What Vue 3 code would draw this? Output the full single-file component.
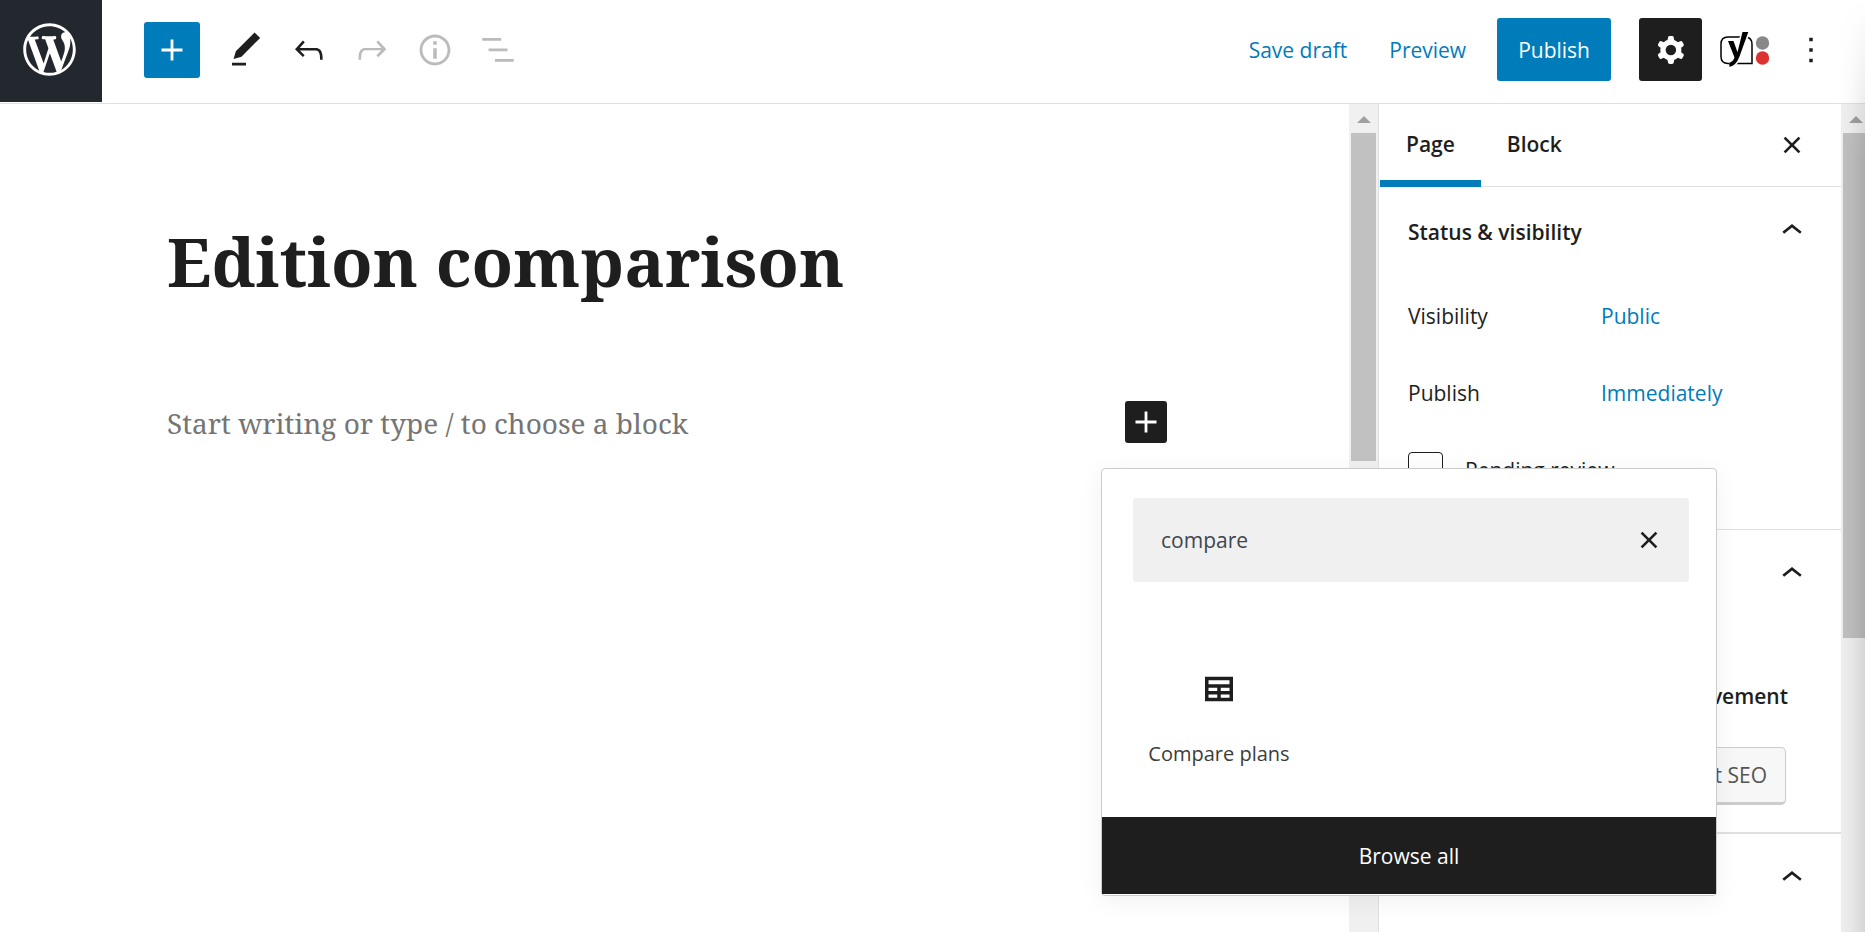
<script setup>
import { ref } from 'vue'

const icons = {
  plus: 'M18 11.2h-5.2V6h-1.6v5.2H6v1.6h5.2V18h1.6v-5.2H18z',
  edit: 'M20.1 5.1L16.9 2 6.2 12.7l-1.3 4.4 4.5-1.3L20.1 5.1zM4 20.8h8v-1.5H4v1.5z',
  undo: 'M18.3 11.7c-.6-.6-1.4-.9-2.3-.9H6.7l2.9-3.3-1.1-1-4.5 5L8.5 16l1-1-2.7-2.7H16c.5 0 .9.2 1.3.5 1 1 1 3.4 1 4.5v.3h1.5v-.2c0-1.5 0-4.3-1.5-5.7z',
  redo: 'M15.6 6.5l-1.1 1 2.9 3.3H8c-.9 0-1.7.3-2.3.9-1.4 1.5-1.4 4.2-1.4 5.6v.2h1.5v-.3c0-1.1 0-3.5 1-4.5.3-.3.7-.5 1.3-.5h9.2L14.5 15l1.1 1.1 4.6-4.6-4.6-5z',
  info: 'M12 3.2c-4.8 0-8.8 3.9-8.8 8.8 0 4.8 3.9 8.8 8.8 8.8 4.8 0 8.8-3.9 8.8-8.8 0-4.8-4-8.8-8.8-8.8zm0 16c-4 0-7.2-3.3-7.2-7.2C4.8 8 8 4.8 12 4.8s7.2 3.3 7.2 7.2c0 4-3.2 7.2-7.2 7.2zM11 17h2v-6h-2v6zm0-8h2V7h-2v2z',
  outline: 'M13.8 5.2H3v1.5h10.8V5.2zm-3.6 12v1.5H21v-1.5H10.2zm7.2-6H6.6v1.5h10.8v-1.5z',
  cog: 'M10.289 4.836A1 1 0 0111.275 4h1.306a1 1 0 01.987.836l.244 1.466c.787.26 1.503.679 2.108 1.218l1.393-.522a1 1 0 011.216.437l.653 1.13a1 1 0 01-.23 1.273l-1.148.944a6.025 6.025 0 010 2.435l1.149.946a1 1 0 01.23 1.272l-.653 1.13a1 1 0 01-1.216.437l-1.394-.522c-.605.54-1.32.958-2.108 1.218l-.244 1.466a1 1 0 01-.987.836h-1.306a1 1 0 01-.986-.836l-.244-1.466a5.995 5.995 0 01-2.108-1.218l-1.394.522a1 1 0 01-1.217-.436l-.653-1.131a1 1 0 01.23-1.272l1.149-.946a6.026 6.026 0 010-2.435l-1.148-.944a1 1 0 01-.23-1.272l.653-1.131a1 1 0 011.217-.437l1.393.522a5.994 5.994 0 012.108-1.218l.244-1.466zM14.929 12a3 3 0 11-6 0 3 3 0 016 0z',
  more: 'M13 19h-2v-2h2v2zm0-6h-2v-2h2v2zm0-6h-2V5h2v2z',
  close: 'M12 13.06l3.712 3.713 1.061-1.06L13.061 12l3.712-3.712-1.06-1.06L12 10.938 8.288 7.227l-1.061 1.06L10.939 12l-3.712 3.712 1.06 1.061L12 13.061z',
  chevron: 'M6.5 12.4L12 8l5.5 4.4-.9 1.2L12 10l-4.5 3.6-1-1.2z',
  table: 'M4 5v14h16V5H4zm14 2v2.300H6V7h12zM6 11.300h5v1.900H6v-1.900zm7 0h5v1.900h-5v-1.900zM6 15.200h5V17H6v-1.800zm7 1.800v-1.800h5V17h-5z'
}

const tools = [
  { icon: 'edit', label: 'Tools' },
  { icon: 'undo', label: 'Undo' },
  { icon: 'redo', label: 'Redo', disabled: true },
  { icon: 'info', label: 'Details', disabled: true },
  { icon: 'outline', label: 'Outline', disabled: true }
]

const query = ref('compare')
const pending = ref(false)
</script>

<template>
  <div class="app">
    <header class="header">
      <a class="logo" href="#" aria-label="View pages">
        <svg viewBox="-2 -2 24 24"><path d="M20 10c0-5.51-4.49-10-10-10C4.48 0 0 4.49 0 10c0 5.52 4.48 10 10 10 5.51 0 10-4.48 10-10zM7.780 15.370L4.370 6.220c.55-.02 1.170-.08 1.170-.08.5-.06.44-1.130-.06-1.110 0 0-1.450.11-2.370.11-.18 0-.37 0-.58-.01C4.120 2.690 6.870 1.110 10 1.110c2.330 0 4.450.87 6.050 2.340-.68-.11-1.650.39-1.650 1.580 0 .74.45 1.360.9 2.100.35.61.55 1.360.55 2.460 0 1.490-1.400 5-1.400 5l-3.030-8.370c.54-.02.82-.17.82-.17.5-.05.44-1.250-.06-1.220 0 0-1.440.12-2.380.12-.87 0-2.330-.12-2.330-.12-.5-.03-.56 1.200-.06 1.220l.92.08 1.260 3.410zM17.410 10c.24-.64.74-1.870.43-4.250.7 1.290 1.050 2.710 1.050 4.250 0 3.290-1.730 6.240-4.400 7.780.97-2.590 1.940-5.200 2.920-7.780zM6.100 18.090C3.120 16.650 1.110 13.530 1.110 10c0-1.300.23-2.480.72-3.590C3.250 10.300 4.670 14.200 6.100 18.090zm4.030-6.630l2.580 6.980c-.86.29-1.760.45-2.710.45-.79 0-1.570-.11-2.290-.33.81-2.380 1.620-4.740 2.420-7.100z" /></svg>
      </a>
      <div class="tools">
        <button class="inserter" type="button" aria-label="Add block">
          <svg class="icon" viewBox="0 0 24 24"><path :d="icons.plus" /></svg>
        </button>
        <button v-for="t in tools" :key="t.icon" class="tool" type="button" :aria-label="t.label" :disabled="t.disabled">
          <svg class="icon" viewBox="0 0 24 24"><path :d="icons[t.icon]" /></svg>
        </button>
      </div>
      <div class="actions">
        <button class="text-button" type="button">Save draft</button>
        <button class="text-button" type="button">Preview</button>
        <button class="publish" type="button">Publish</button>
        <button class="settings" type="button" aria-label="Settings">
          <svg class="icon" viewBox="0 0 24 24"><path fill-rule="evenodd" :d="icons.cog" /></svg>
        </button>
        <button class="yoast" type="button" aria-label="Yoast SEO">
          <svg viewBox="0 0 50 36">
            <path class="frame" d="M32 31.500V12.500Q32 5 25 5H8Q1 5 1 12V24.500Q1 31.500 8 31.500z" />
            <path class="halo" d="M12 13L17.500 25M25.500 1L17.500 22Q14.500 31.500 9.500 32.500" />
            <path class="mark" d="M8 9h5.500l4 11.200L22.500 0h5.800L19.500 24.500Q16 34 9.300 34.800V30.800Q13 30 14.500 25.600z" />
            <circle class="grey" cx="42.500" cy="11" r="6.700" />
            <circle class="red" cx="42.500" cy="26" r="6.700" />
          </svg>
        </button>
        <button class="more" type="button" aria-label="Options">
          <svg class="icon" viewBox="0 0 24 24"><path :d="icons.more" /></svg>
        </button>
      </div>
    </header>

    <div class="body">
      <main class="editor">
        <h1>Edition comparison</h1>
        <div class="block">
          <p>Start writing or type / to choose a block</p>
          <div class="anchor">
            <button class="block-add" type="button" aria-label="Add block">
              <svg class="icon" viewBox="0 0 24 24"><path :d="icons.plus" /></svg>
            </button>
            <section class="popover" aria-label="Block inserter">
              <div class="search">
                <input v-model="query" type="text" aria-label="Search for a block" />
                <button type="button" aria-label="Reset search" @click="query = ''">
                  <svg class="icon" viewBox="0 0 24 24"><path :d="icons.close" /></svg>
                </button>
              </div>
              <div class="results">
                <button class="result" type="button">
                  <svg class="icon" viewBox="0 0 24 24"><path :d="icons.table" /></svg>
                  <span>Compare plans</span>
                </button>
              </div>
              <button class="browse" type="button">Browse all</button>
            </section>
          </div>
        </div>
      </main>
      <div class="scrollbar editor-scroll"><i class="arrow"></i><i class="thumb"></i></div>

      <aside class="sidebar">
        <div class="tabs">
          <button class="tab active" type="button">Page</button>
          <button class="tab" type="button">Block</button>
          <button class="close" type="button" aria-label="Close settings">
            <svg class="icon" viewBox="0 0 24 24"><path :d="icons.close" /></svg>
          </button>
        </div>
        <section class="panel status">
          <button class="panel-head" type="button">
            <span>Status &amp; visibility</span>
            <svg class="icon" viewBox="0 0 24 24"><path :d="icons.chevron" /></svg>
          </button>
          <div class="row"><span>Visibility</span><button class="link" type="button">Public</button></div>
          <div class="row"><span>Publish</span><button class="link" type="button">Immediately</button></div>
          <div class="check">
            <input id="pending" v-model="pending" type="checkbox" />
            <label for="pending">Pending review</label>
          </div>
        </section>
        <section class="panel seo">
          <button class="panel-head" type="button" aria-label="SEO">
            <span></span>
            <svg class="icon" viewBox="0 0 24 24"><path :d="icons.chevron" /></svg>
          </button>
          <p class="score"><strong>Needs improvement</strong></p>
          <button class="improve" type="button">Yoast SEO</button>
        </section>
        <section class="panel">
          <button class="panel-head" type="button" aria-label="More settings">
            <span></span>
            <svg class="icon" viewBox="0 0 24 24"><path :d="icons.chevron" /></svg>
          </button>
        </section>
      </aside>
      <div class="scrollbar page-scroll"><i class="arrow"></i><i class="thumb"></i></div>
    </div>
    <div class="edge"></div>
  </div>
</template>

<style>
html, body { margin: 0; background: #fff; }
</style>

<style scoped>
.app {
  position: relative;
  display: flex;
  flex-direction: column;
  height: 100vh;
  overflow: hidden;
  background: #fff;
  color: #1e1e1e;
  font-family: "Segoe UI", "Open Sans", "Noto Sans", sans-serif;
  font-size: 21px;
  line-height: 32px;
}
*, *::before, *::after { box-sizing: border-box; }
button {
  display: flex;
  align-items: center;
  margin: 0;
  padding: 0;
  border: 0;
  background: none;
  color: inherit;
  font: inherit;
}
svg { display: block; fill: currentColor; flex: none; }
.icon { width: 42px; height: 42px; }

.header {
  display: flex;
  flex: none;
  align-items: center;
  height: 104px;
  border-bottom: 1px solid #e0e0e0;
}
.logo {
  display: flex;
  align-items: center;
  justify-content: center;
  align-self: flex-start;
  width: 102px;
  height: 102px;
  background: #23282e;
  color: #fff;
}
.logo svg { width: 63px; height: 63px; margin-right: 4px; margin-bottom: 4px; }
.tools { display: flex; align-items: center; margin-left: 42px; padding-bottom: 3px; }
.inserter {
  justify-content: center;
  width: 56px;
  height: 56px;
  margin-right: 14px;
  border-radius: 3px;
  background: #007cba;
  color: #fff;
}
.tool { justify-content: center; width: 63px; height: 63px; }
.tool:disabled { color: #bbb; }
.actions { display: flex; align-items: center; margin-left: auto; padding-bottom: 4px; padding-right: 33px; }
.text-button { margin-right: 42px; color: #007cba; }
.text-button + .publish { margin-left: -11px; }
.publish {
  height: 63px;
  padding: 0 21px;
  border-radius: 3px;
  background: #007cba;
  color: #fff;
}
.settings {
  justify-content: center;
  width: 63px;
  height: 63px;
  margin-left: 28px;
  border-radius: 3px;
  background: #1e1e1e;
  color: #fff;
}
.yoast { margin-left: 18px; margin-right: 20px; }
.yoast svg { width: 50px; height: 36px; }
.frame { fill: none; stroke: #000; stroke-width: 1.500; }
.halo { fill: none; stroke: #fff; stroke-width: 8; }
.mark { fill: #000; }
.grey { fill: #888; }
.red { fill: #dc3232; }

.body { display: flex; flex: 1; min-height: 0; }
.editor { flex: 1; min-width: 0; padding: 108px 182px 0 167px; }
h1 {
  margin: 0;
  font: 700 68px/98px "Noto Serif", "DejaVu Serif", serif;
  white-space: nowrap;
}
.block { display: flex; align-items: center; justify-content: space-between; margin-top: 87px; height: 50px; }
.block p { margin: 0; padding-top: 2px; color: #757575; font: 28px/50px "Noto Serif", "DejaVu Serif", serif; white-space: nowrap; }
.anchor { position: relative; }
.block-add {
  justify-content: center;
  width: 42px;
  height: 42px;
  border-radius: 3px;
  background: #1e1e1e;
  color: #fff;
}
.popover {
  position: absolute;
  z-index: 2;
  top: 67px;
  left: -24px;
  width: 616px;
  border: 1px solid #ccc;
  border-radius: 4px;
  padding-bottom: 1px;
  background: #fff;
  box-shadow: 0 5px 26px rgba(0, 0, 0, .06);
}
.search {
  display: flex;
  align-items: center;
  height: 84px;
  margin: 29px 27px 0 31px;
  padding: 0 19px 0 28px;
  border-radius: 3px;
  background: #f0f0f0;
}
.search input {
  flex: 1;
  min-width: 0;
  padding: 0;
  border: 0;
  outline: 0;
  background: none;
  color: #40464d;
  font: inherit;
}
.results { padding: 86px 31px 47px; }
.result { flex-direction: column; gap: 28px; width: 172px; font-size: 20px; color: #3c3c3c; }
.result .icon { color: #1e1e1e; }
.browse {
  justify-content: center;
  width: 100%;
  height: 77px;
  background: #1e1e1e;
  color: #fff;
}

.scrollbar { position: relative; flex: none; background: #f0f0f0; }
.editor-scroll { width: 29px; }
.page-scroll { width: 24px; }
.arrow {
  display: block;
  width: 14px;
  height: 7px;
  margin: 12px 0 10px 8px;
  background: #a0a0a0;
  clip-path: polygon(50% 0, 100% 100%, 0 100%);
}
.thumb { display: block; margin-left: 2px; background: #c1c1c1; }
.editor-scroll .thumb { width: 25px; height: 328px; }
.page-scroll .thumb { height: 505px; }

.sidebar { flex: none; width: 463px; overflow: hidden; border-left: 1px solid #e0e0e0; }
.tabs { display: flex; height: 83px; padding-left: 1px; border-bottom: 1px solid #e0e0e0; }
.tab { height: 83px; padding: 0 26px; font-weight: 600; border-bottom: 7px solid transparent; border-top: 4px solid transparent; }
.tab.active { border-bottom-color: #007cba; }
.close { margin-left: auto; padding-right: 28px; }
.panel { padding: 0 28px 0 29px; border-bottom: 1px solid #e0e0e0; }
.panel:last-child { border-bottom: 0; }
.panel-head { justify-content: space-between; width: 100%; height: 90px; font-weight: 600; }
.panel-head .icon { margin-bottom: 2px; }
.status { padding-bottom: 14px; }
.status .panel-head { margin-bottom: 7px; }
.row { display: flex; align-items: center; height: 63px; margin-bottom: 14px; }
.row span { width: 193px; }
.link { color: #007cba; }
.check { display: flex; align-items: center; gap: 22px; height: 63px; margin-bottom: 14px; }
.check input { appearance: none; width: 35px; height: 35px; margin: 0; border: 1px solid #1e1e1e; border-radius: 4px; background: #fff; }
.seo { border-bottom-width: 2px; }
.score { margin: 60px 25px 0 0; text-align: right; }
.score strong { font-weight: 600; }
.improve {
  justify-content: flex-end;
  width: 378px;
  height: 58px;
  margin: 35px 0 27px;
  padding-right: 18px;
  border: 1px solid #ccc;
  border-bottom-width: 3px;
  border-radius: 5px;
  background: #f7f7f7;
  color: #555;
}
.edge {
  position: absolute;
  z-index: 3;
  top: 0;
  right: 0;
  bottom: 0;
  width: 28px;
  background: linear-gradient(to right, transparent, rgba(0, 0, 0, .03) 50%, rgba(0, 0, 0, .11));
  mask-image: linear-gradient(transparent, #000 160px);
  pointer-events: none;
}
</style>
